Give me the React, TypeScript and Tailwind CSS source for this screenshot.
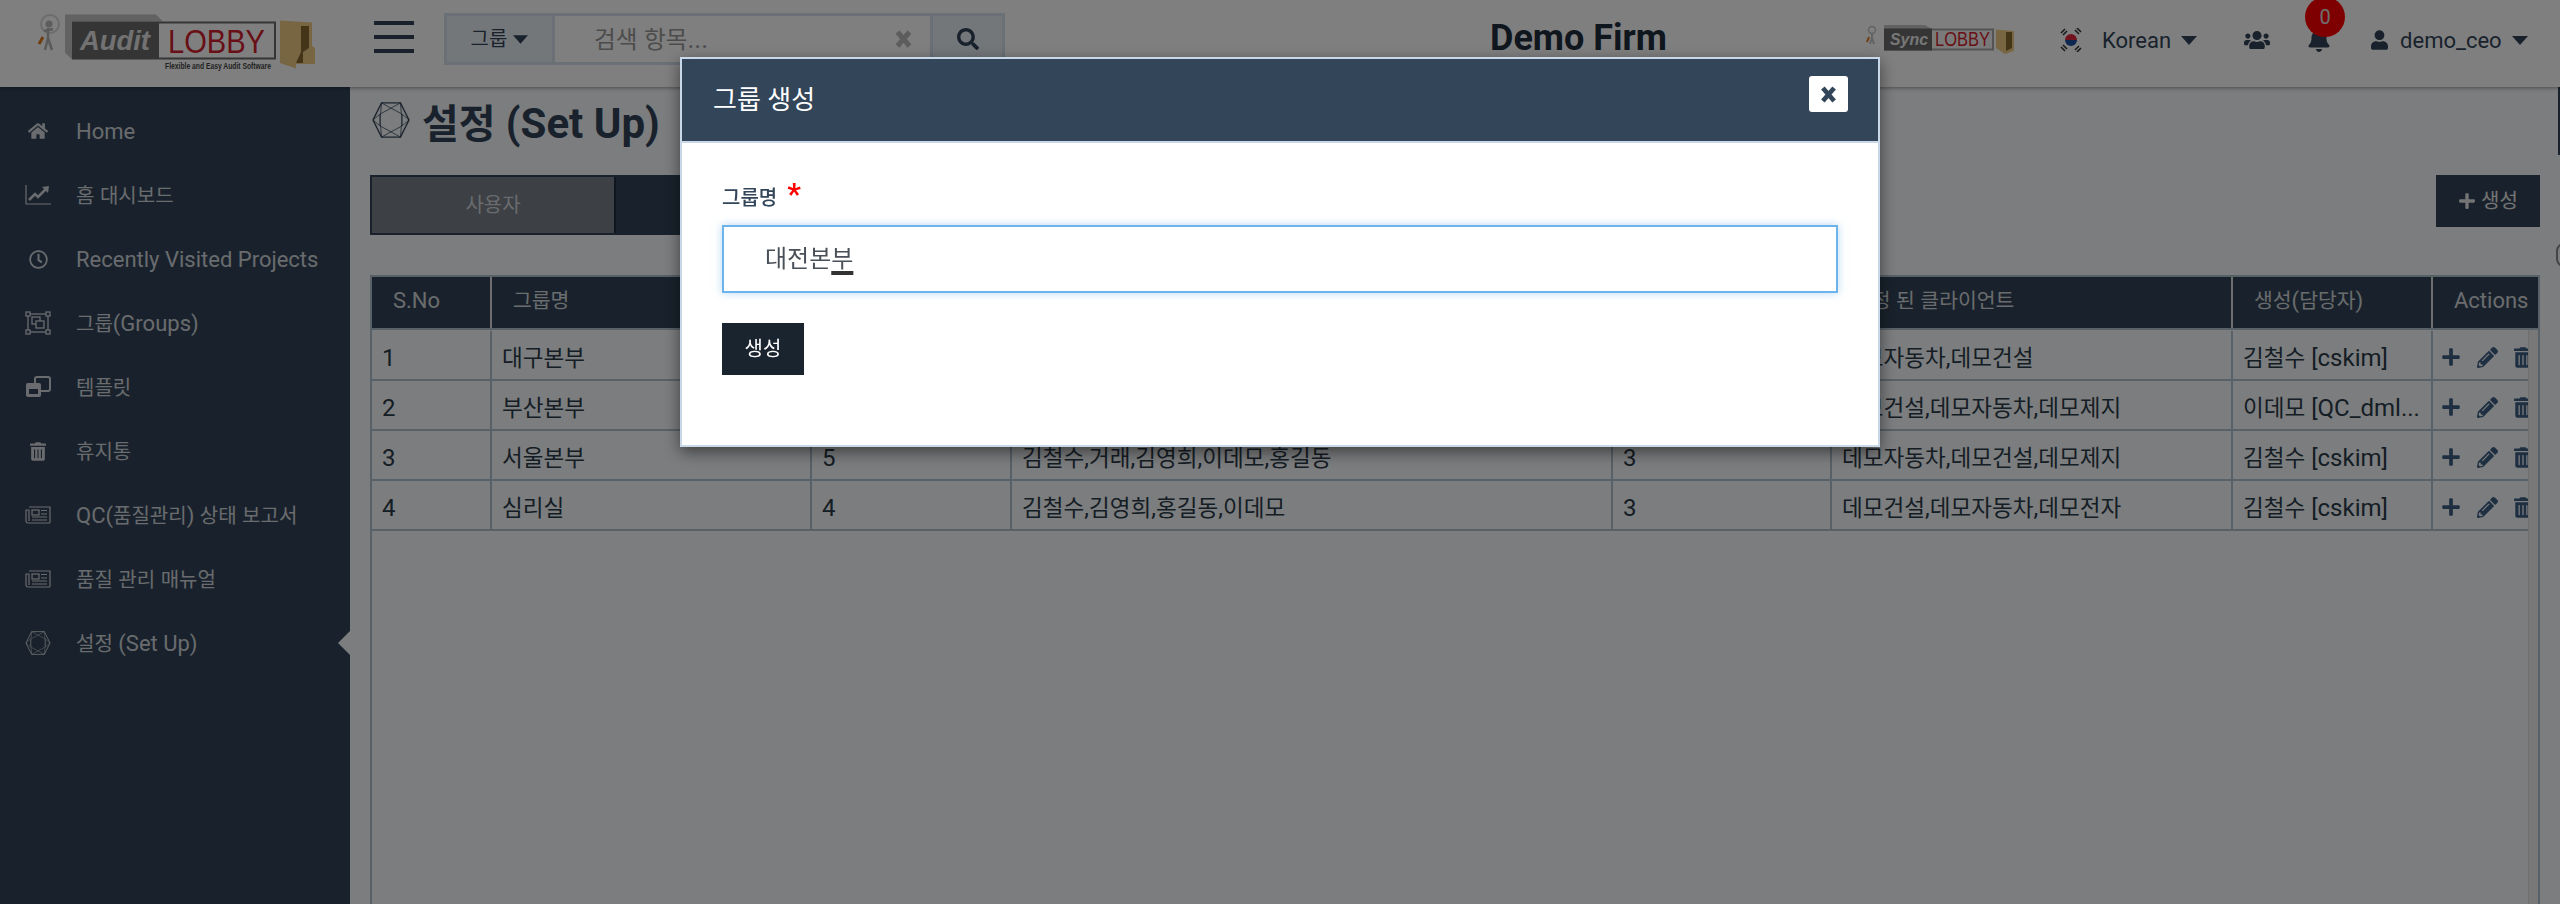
import { FaBell, FaHome, FaPencilAlt, FaPlus, FaRegClock, FaSearch, FaTrashAlt, FaUser, FaUsers } from "react-icons/fa";

const fontStack = "font-['Roboto','Noto_Sans_CJK_KR',sans-serif]";

// hangul runs sit a little smaller than the latin text around them
const Mixed = ({ text, hangul = "text-[0.91em]" }: { text: string; hangul?: string }) => (
  <>
    {text.split(/([\uAC00-\uD7A3]+)/).map((part, i) =>
      /[\uAC00-\uD7A3]/.test(part) ? <span key={i} className={hangul}>{part}</span> : <span key={i}>{part}</span>
    )}
  </>
);

const Caret = ({ className }: { className: string }) => (
  <svg viewBox="0 0 16 9" fill="currentColor" className={className}>
    <polygon points="0,0 16,0 8,9" />
  </svg>
);

const ThickX = ({ className }: { className: string }) => (
  <svg viewBox="0 0 16 20" fill="none" stroke="currentColor" strokeWidth="5" className={className}>
    <path d="M2 3 L14 17 M14 3 L2 17" />
  </svg>
);

const HexIcon = ({ className }: { className: string }) => (
  <svg viewBox="0 0 40 38" fill="none" stroke="currentColor" strokeWidth="0.8" className={className}>
    <polygon points="10,1 30,1 39,19 30,37 10,37 1,19" strokeWidth="1.4" />
    <path d="M10 1 L32 13 L30 37 L8 25 Z M30 1 L8 13 L10 37 L32 25 Z M1 19 L8 13 M39 19 L32 13 M1 19 L8 25 M39 19 L32 25" />
  </svg>
);

const ChartIcon = () => (
  <svg viewBox="0 0 26 20" className="w-[26px] h-[20px]" fill="none" stroke="currentColor">
    <path d="M1 0 V19 H26" strokeWidth="1.2" />
    <path d="M4 15 L10 9 L13 12 L21 4" strokeWidth="2.6" />
    <polygon points="17,2 24,1 23,8" fill="currentColor" stroke="none" />
  </svg>
);

const GroupIcon = () => (
  <svg viewBox="0 0 26 24" className="w-[26px] h-[24px]" fill="none" stroke="currentColor" strokeWidth="1.3">
    <rect x="3" y="3" width="20" height="18" />
    <rect x="1" y="1" width="4" height="4" fill="#324559" />
    <rect x="21" y="1" width="4" height="4" fill="#324559" />
    <rect x="1" y="19" width="4" height="4" fill="#324559" />
    <rect x="21" y="19" width="4" height="4" fill="#324559" />
    <rect x="7" y="6" width="8" height="7" />
    <rect x="11" y="10" width="8" height="7" fill="#324559" />
  </svg>
);

const TemplateIcon = () => (
  <svg viewBox="0 0 26 22" className="w-[26px] h-[22px]">
    <rect x="10" y="1" width="15" height="14" rx="2" fill="none" stroke="currentColor" strokeWidth="2" />
    <rect x="1" y="7" width="15" height="14" rx="2" fill="currentColor" />
    <rect x="4" y="13" width="9" height="5" fill="#324559" />
  </svg>
);

const NewsIcon = () => (
  <svg viewBox="0 0 26 18" className="w-[26px] h-[18px]" fill="none" stroke="currentColor" strokeWidth="1.2">
    <path d="M4 1 H25 V16 a1 1 0 0 1 -1 1 H3 a2 2 0 0 1 -2 -2 V4 H4 V15" />
    <rect x="7" y="4" width="7" height="5" />
    <path d="M16 4.5 H22 M16 8 H22 M7 11 H22 M7 14 H22" />
  </svg>
);

const AuditLogo = () => (
  <svg viewBox="0 0 290 60" className="w-[290px] h-[60px] shrink-0">
    {/* figure with magnifier */}
    <circle cx="16" cy="10" r="9" fill="none" stroke="#d8d8d8" strokeWidth="2" />
    <circle cx="15" cy="10" r="3.5" fill="#bbbbbb" />
    <path d="M14 14 L14 24 L11 36 M14 24 L18 36 M10 17 L19 15" stroke="#b5b5b5" strokeWidth="2.5" fill="none" />
    <path d="M9 23 L5 30" stroke="#e07a1c" strokeWidth="3" />
    {/* box */}
    <polygon points="31,0.5 122,0.5 129,7.5 38,7.5 38,45.5 31,38.5" fill="#c4c4c4" />
    <rect x="38" y="7.5" width="204" height="38" fill="#6a6a6a" />
    <rect x="125" y="9.5" width="115" height="34" fill="#ffffff" />
    <text x="46" y="36" fill="#e4e4e4" fontSize="27" fontWeight="700" fontStyle="italic" fontFamily="Liberation Sans" textLength="70" lengthAdjust="spacingAndGlyphs">Audit</text>
    <text x="134" y="38.5" fill="#d11f2f" fontSize="34" fontFamily="Liberation Sans" textLength="97" lengthAdjust="spacingAndGlyphs">LOBBY</text>
    <text x="131" y="55" fill="#444444" fontSize="8.5" fontWeight="700" fontFamily="Liberation Sans" textLength="106" lengthAdjust="spacingAndGlyphs">Flexible and Easy Audit Software</text>
    {/* folder */}
    <polygon points="246,6.5 278,8.5 278,32 281,34 281,50 262,50 262,54.5 246,49" fill="#f0cb84" />
    <polygon points="267,12 275,12 275,34 269,38 269,49 262,49 267,38" fill="#8a6a30" />
  </svg>
);

const SyncLogo = () => (
  <svg viewBox="0 0 150 60" className="w-[150px] h-[60px] shrink-0">
    <circle cx="7" cy="16" r="3.5" fill="none" stroke="#c4c4c4" strokeWidth="1.5" />
    <path d="M7 19 L7 24 M5 30 L7 24 L9 30" stroke="#c4c4c4" strokeWidth="2" fill="none" />
    <path d="M4 23 L2 28" stroke="#e07a1c" strokeWidth="2" />
    <polygon points="19,11 60,11 66,14.5 19,14.5" fill="#c4c4c4" />
    <rect x="19" y="14.5" width="110" height="22" fill="#a8a8a8" />
    <rect x="19" y="14.5" width="48" height="22" fill="#6a6a6a" />
    <rect x="67" y="16.5" width="60" height="18" fill="#f4f4f4" />
    <text x="25" y="31" fill="#eeeeee" fontSize="17" fontWeight="700" fontStyle="italic" fontFamily="Liberation Sans" textLength="38" lengthAdjust="spacingAndGlyphs">Sync</text>
    <text x="70" y="32" fill="#d11f2f" fontSize="20" fontFamily="Liberation Sans" textLength="55" lengthAdjust="spacingAndGlyphs">LOBBY</text>
    <polygon points="131,15.5 149,17 149,37 140,40 131,34" fill="#f0cb84" />
    <polygon points="141,18 147,18 147,34 141,37" fill="#8a6a30" />
  </svg>
);

const KoreaFlag = () => (
  <svg viewBox="0 0 24 24" className="w-[24px] h-[24px]">
    <path d="M6 12 a6 6 0 0 1 12 0 z" fill="#e3263c" />
    <path d="M6 12 a6 6 0 0 0 12 0 z" fill="#1a4fa0" />
    <path d="M2 5 L6 1 M4 7 L8 3 M16 2 L20 6 M18 0 L22 4 M2 19 L6 23 M4 17 L8 21 M16 22 L20 18 M18 24 L22 20" stroke="#333333" strokeWidth="1.6" />
  </svg>
);

const navItems = [
  { label: "Home", icon: <FaHome className="w-[20px] h-[18px]" /> },
  { label: "홈 대시보드", icon: <ChartIcon /> },
  { label: "Recently Visited Projects", icon: <FaRegClock className="w-[19px] h-[19px]" /> },
  { label: "그룹(Groups)", icon: <GroupIcon /> },
  { label: "템플릿", icon: <TemplateIcon /> },
  { label: "휴지통", icon: <FaTrashAlt className="w-[16px] h-[19px]" /> },
  { label: "QC(품질관리) 상태 보고서", icon: <NewsIcon /> },
  { label: "품질 관리 매뉴얼", icon: <NewsIcon /> },
  { label: "설정 (Set Up)", icon: <HexIcon className="w-[26px] h-[24px]" /> },
];

const rows = [
  { no: 1, name: "대구본부", count: 4, members: "김철수,김영희,이데모,홍길동", clients: 2, clientNames: "데모자동차,데모건설", owner: "김철수 [cskim]" },
  { no: 2, name: "부산본부", count: 3, members: "김영희,이데모,홍길동", clients: 3, clientNames: "데모건설,데모자동차,데모제지", owner: "이데모 [QC_dml..." },
  { no: 3, name: "서울본부", count: 5, members: "김철수,거래,김영희,이데모,홍길동", clients: 3, clientNames: "데모자동차,데모건설,데모제지", owner: "김철수 [cskim]" },
  { no: 4, name: "심리실", count: 4, members: "김철수,김영희,홍길동,이데모", clients: 3, clientNames: "데모건설,데모자동차,데모전자", owner: "김철수 [cskim]" },
];

const headers = ["S.No", "그룹명", "구성원 수", "구성원", "클라이언트 수", "지정 된 클라이언트", "생성(담당자)", "Actions"];
const widths = ["w-[120px]", "w-[320px]", "w-[200px]", "w-[601px]", "w-[219px]", "w-[401px]", "w-[200px]", "w-[108px]"];

export default function App() {
  return (
    <div className={`relative h-screen w-full overflow-hidden bg-[#f8fafc] text-[#324559] ${fontStack}`}>
      {/* Top bar */}
      <header className="h-[87px] bg-white flex items-center shadow-[0_1px_4px_rgba(0,0,0,0.4)] relative z-10">
        <div className="w-[374px] pl-[34px] shrink-0 flex">
          <AuditLogo />
        </div>
        <div className="w-[40px] flex flex-col gap-[10px] -mt-[13px] shrink-0">
          <div className="h-[4px] bg-[#324559]" />
          <div className="h-[4px] bg-[#324559]" />
          <div className="h-[4px] bg-[#324559]" />
        </div>
        <div className="ml-[30px] w-[561px] h-[52px] -mt-[9px] flex border-[3px] border-[#d4e0ec] shrink-0">
          <div className="w-[108px] bg-[#e8eef3] flex items-center justify-center gap-[6px] text-[20px] border-r-[3px] border-[#d4e0ec]">
            그룹 <Caret className="w-[15px] h-[9px]" />
          </div>
          <div className="flex-1 flex items-center pl-[39px] pr-[18px] text-[26px] text-[#999999]">
            <span className="flex-1"><Mixed text="검색 항목..." /></span>
            <ThickX className="w-[17px] h-[20px] text-[#bbbbbb]" />
          </div>
          <div className="w-[72px] bg-[#e8eef3] border-l-[3px] border-[#d4e0ec] flex items-center justify-center">
            <FaSearch className="w-[22px] h-[22px]" />
          </div>
        </div>
        <div className="ml-[485px] w-[375px] shrink-0 text-[36px] font-bold text-[#1f2d3d] -mt-[12px]">Demo Firm</div>
        <SyncLogo />
        <div className="ml-[44px] flex items-center -mt-[7px]">
          <KoreaFlag />
          <span className="ml-[19px] text-[22px]">Korean</span>
          <Caret className="ml-[10px] w-[16px] h-[9px]" />
          <FaUsers className="ml-[47px] w-[26px] h-[26px]" />
          <div className="relative ml-[37px]">
            <FaBell className="w-[24px] h-[24px]" />
            <span className="absolute -top-[31px] -left-[2px] w-[40px] h-[40px] rounded-full bg-[#ff0000] text-[#dddddd] text-[20px] flex items-center justify-center">0</span>
          </div>
          <FaUser className="ml-[40px] w-[17px] h-[24px]" />
          <span className="ml-[12px] text-[22px]">demo_ceo</span>
          <Caret className="ml-[10px] w-[16px] h-[9px]" />
        </div>
      </header>

      <div className="flex h-[817px]">
        {/* Sidebar */}
        <aside className="w-[350px] shrink-0 bg-[#324559] pt-[12px]">
          {navItems.map((item, i) => (
            <div key={i} className="relative h-[64px] flex items-center text-[22px] text-[#d2d7dc]">
              <span className="w-[76px] shrink-0 flex justify-center">{item.icon}</span>
              <span><Mixed text={item.label} /></span>
              {i === navItems.length - 1 && (
                <span className="absolute right-0 top-[20px] w-0 h-0 border-y-[12px] border-y-transparent border-r-[12px] border-r-[#f8fafc]" />
              )}
            </div>
          ))}
        </aside>

        {/* Main */}
        <main className="relative flex-1 min-w-0 px-[20px] flex flex-col">
          <div className="flex items-center h-[66px] pl-[2px]">
            <HexIcon className="w-[38px] h-[36px]" />
            <h1 className="ml-[12px] pt-[6px] text-[42px] font-bold"><Mixed text="설정 (Set Up)" hangul="text-[0.95em]" /></h1>
          </div>
          <div className="flex justify-between mt-[22px] h-[60px]">
            <div className="flex border-[2px] border-[#324559] h-[60px]">
              <div className="w-[242px] bg-[#7b8088] text-[#d2d7dc] text-[20px] flex items-center justify-center">사용자</div>
              <div className="w-[245px] bg-[#324559] text-white text-[20px] flex items-center justify-center border-l-[2px] border-[#1f2d3d]">그룹</div>
            </div>
            <button className="w-[104px] h-[52px] bg-[#324559] text-[#e8e8e8] text-[20px] flex items-center justify-center gap-[5px]">
              <FaPlus className="w-[18px] h-[18px]" /> 생성
            </button>
          </div>

          {/* Table */}
          <div className="mt-[40px] flex-1 border-[2px] border-b-0 border-[#b0c0d0]">
            <div className="flex h-[53px] bg-[#324559] text-[#d5d8dc] text-[22px] border-b-[2px] border-[#b0c0d0]">
              {headers.map((h, i) => (
                <div key={h} className={`${widths[i]} shrink-0 flex items-center pb-[4px] pl-[21px] border-r-[2px] border-[#dddddd] last:border-r-0 whitespace-nowrap`}>
                  <span><Mixed text={h} hangul="text-[0.93em]" /></span>
                </div>
              ))}
            </div>
            <div className="flex h-full">
              <div className="flex-1 min-w-0 overflow-hidden pt-[1px]">
                {rows.map((r) => (
                  <div key={r.no} className="flex h-[50px] text-[24px] text-[#2b3a4a] border-b-[2px] border-[#b0c0d0]">
                    {[r.no, r.name, r.count, r.members, r.clients, r.clientNames, r.owner].map((v, i) => (
                      <div key={i} className={`${widths[i]} shrink-0 pl-[10px] pt-[5px] flex items-center border-r-[2px] border-[#b0c0d0] whitespace-nowrap`}>
                        <span><Mixed text={String(v)} hangul="text-[0.94em]" /></span>
                      </div>
                    ))}
                    <div className="shrink-0 w-[108px] pl-[8px] pt-[4px] flex items-center gap-[16px] text-[#3f5f85]">
                      <FaPlus className="w-[20px] h-[20px] shrink-0" />
                      <FaPencilAlt className="w-[21px] h-[21px] shrink-0" />
                      <FaTrashAlt className="w-[18px] h-[21px] shrink-0" />
                    </div>
                  </div>
                ))}
              </div>
              <div className="w-[10px] shrink-0 bg-[#f1f1f1] border-l-[1px] border-[#dddddd]" />
            </div>
          </div>
          {/* page edge bits */}
          <div className="absolute right-0 top-0 w-[2px] h-[68px] bg-[#324559]" />
          <div className="absolute -right-[12px] top-[156px] w-[16px] h-[24px] rounded-full border-[2px] border-[#888888]" />
        </main>
      </div>

      {/* Modal backdrop */}
      <div className="fixed inset-0 z-20 bg-black/50 flex justify-center items-start pt-[57px]">
        <div className="w-[1200px] h-[390px] bg-white border-[2px] border-[#c9d8e8] shadow-[0_5px_15px_rgba(0,0,0,0.5)]">
          <div className="h-[84px] bg-[#324559] border-b-[2px] border-[#c9d8e8] flex items-center justify-between pl-[31px] pr-[30px]">
            <span className="text-[26px] text-white">그룹 생성</span>
            <button className="w-[39px] h-[36px] bg-white rounded-[3px] flex items-center justify-center -mt-[12px] text-[#324559]">
              <ThickX className="w-[15px] h-[19px]" />
            </button>
          </div>
          <div className="px-[40px] pt-[40px]">
            <div className="h-[42px] flex items-start">
              <span className="text-[20px] font-medium text-[#324559] leading-[28px] mt-[1px]">그룹명</span>
              <span className="ml-[10px] -mt-[4px] text-[30px] font-bold text-[#ff0000] leading-[30px]">*</span>
            </div>
            <div className="h-[68px] border-[2px] border-[#6cb2eb] shadow-[0_0_8px_rgba(108,178,235,0.5)] flex items-center pl-[41px] text-[24px] text-[#495057]">
              <span>대전본<span className="underline decoration-[4px] underline-offset-[4px] decoration-[#333333]">부</span></span>
            </div>
            <button className="mt-[30px] w-[82px] h-[52px] bg-[#1a242f] text-white text-[20px]">생성</button>
          </div>
        </div>
      </div>
    </div>
  );
}
